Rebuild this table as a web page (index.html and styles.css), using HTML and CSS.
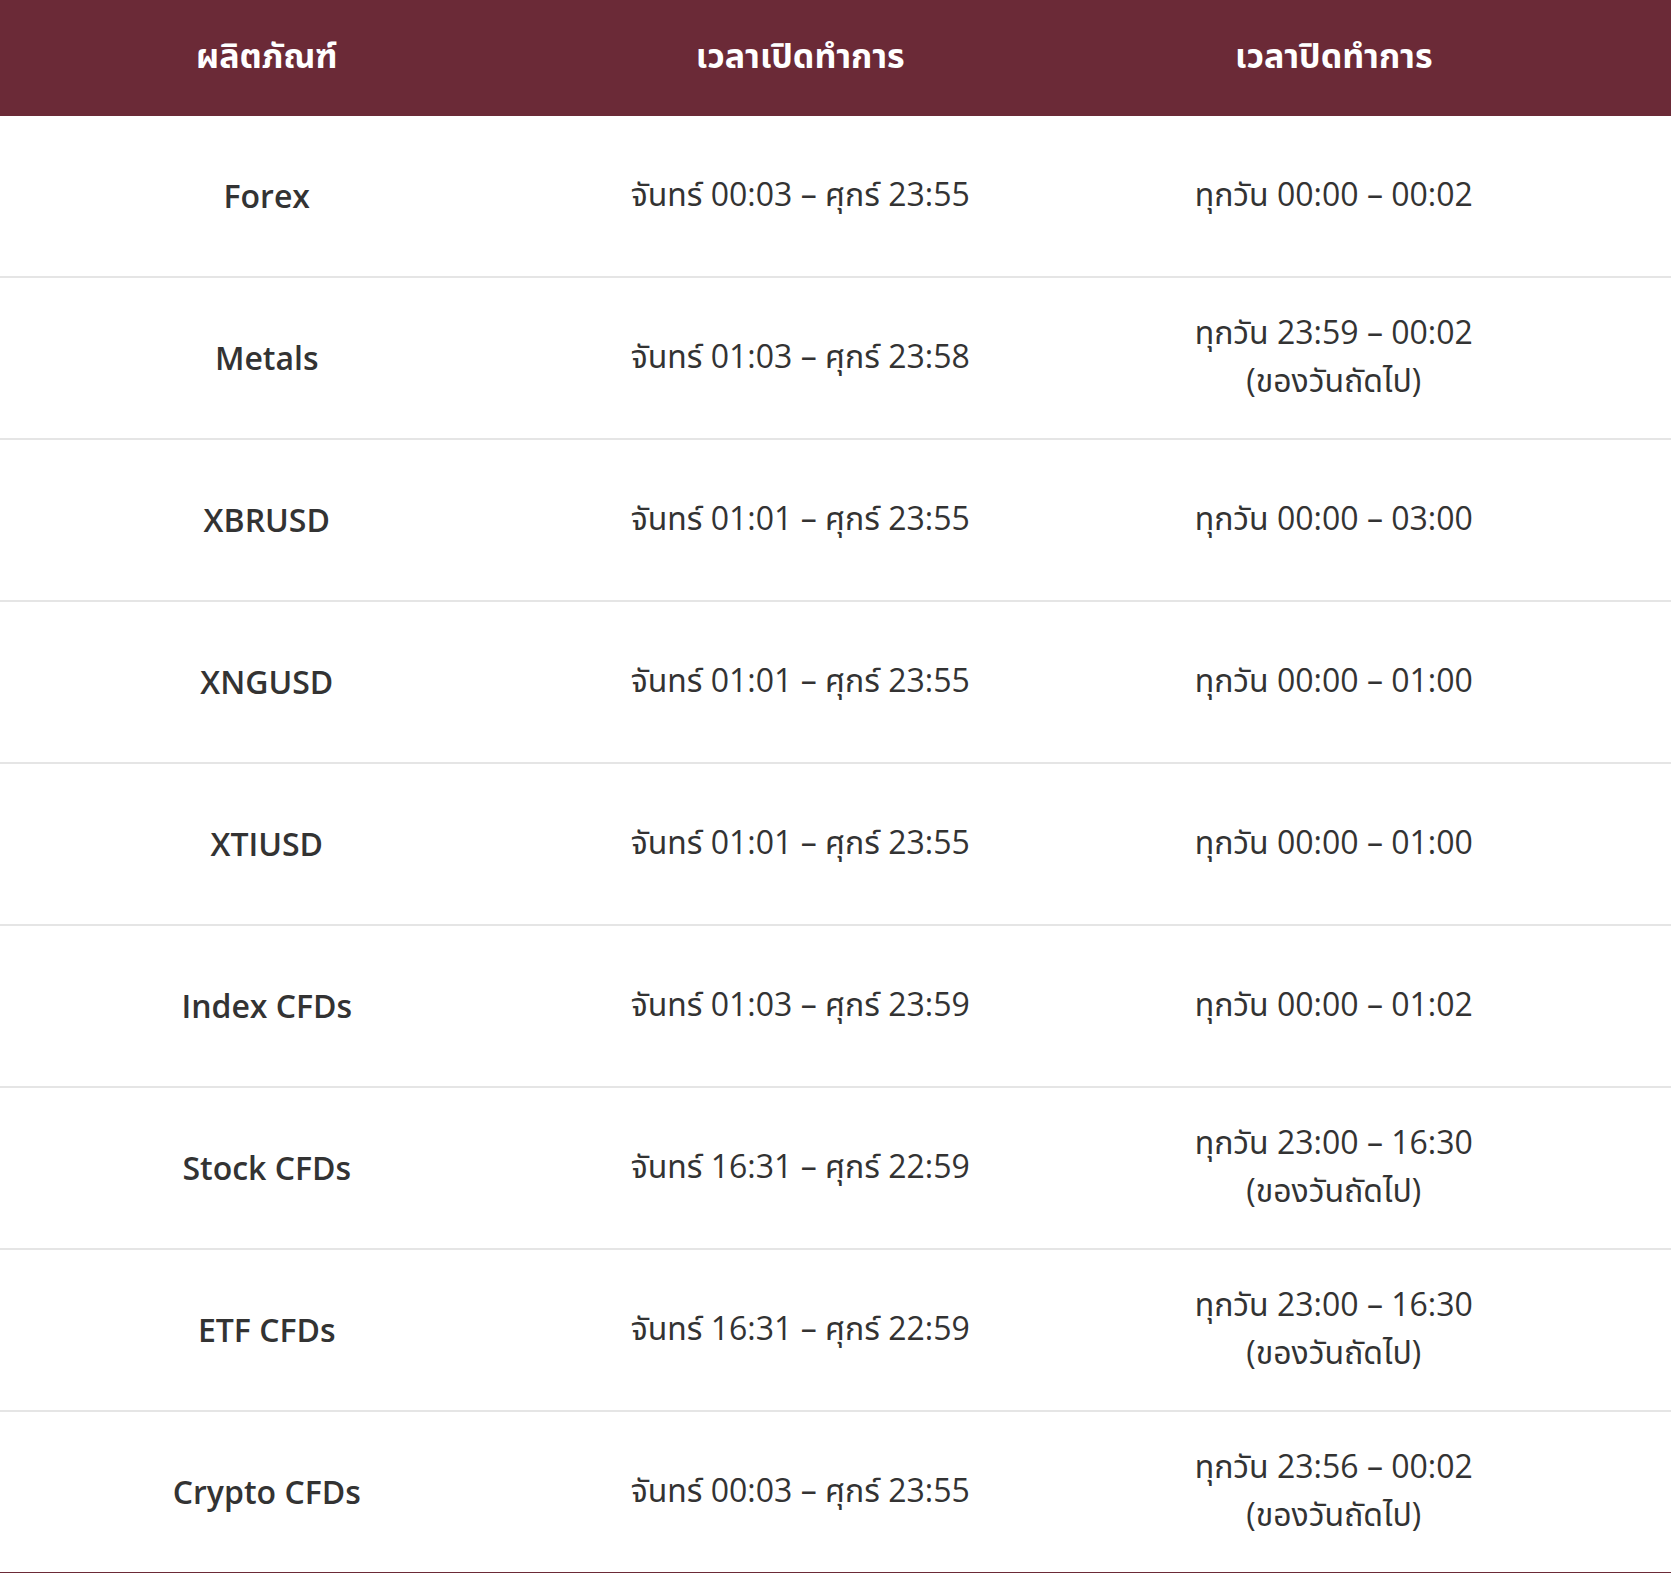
FILE: index.html
```html
<!DOCTYPE html>
<html lang="th">
<head>
<meta charset="utf-8">
<title>เวลาทำการ</title>
<link rel="stylesheet" href="styles.css">
</head>
<body>
<div class="table">
  <div class="row head">
    <div class="cell">ผลิตภัณฑ์</div>
    <div class="cell">เวลาเปิดทำการ</div>
    <div class="cell">เวลาปิดทำการ</div>
  </div>
  <div class="row">
    <div class="cell name">Forex</div>
    <div class="cell time">จันทร์ 00:03 – ศุกร์ 23:55</div>
    <div class="cell time">ทุกวัน 00:00 – 00:02</div>
  </div>
  <div class="row">
    <div class="cell name">Metals</div>
    <div class="cell time">จันทร์ 01:03 – ศุกร์ 23:58</div>
    <div class="cell time">ทุกวัน 23:59 – 00:02<br>(ของวันถัดไป)</div>
  </div>
  <div class="row">
    <div class="cell name">XBRUSD</div>
    <div class="cell time">จันทร์ 01:01 – ศุกร์ 23:55</div>
    <div class="cell time">ทุกวัน 00:00 – 03:00</div>
  </div>
  <div class="row">
    <div class="cell name">XNGUSD</div>
    <div class="cell time">จันทร์ 01:01 – ศุกร์ 23:55</div>
    <div class="cell time">ทุกวัน 00:00 – 01:00</div>
  </div>
  <div class="row">
    <div class="cell name">XTIUSD</div>
    <div class="cell time">จันทร์ 01:01 – ศุกร์ 23:55</div>
    <div class="cell time">ทุกวัน 00:00 – 01:00</div>
  </div>
  <div class="row">
    <div class="cell name">Index CFDs</div>
    <div class="cell time">จันทร์ 01:03 – ศุกร์ 23:59</div>
    <div class="cell time">ทุกวัน 00:00 – 01:02</div>
  </div>
  <div class="row">
    <div class="cell name">Stock CFDs</div>
    <div class="cell time">จันทร์ 16:31 – ศุกร์ 22:59</div>
    <div class="cell time">ทุกวัน 23:00 – 16:30<br>(ของวันถัดไป)</div>
  </div>
  <div class="row">
    <div class="cell name">ETF CFDs</div>
    <div class="cell time">จันทร์ 16:31 – ศุกร์ 22:59</div>
    <div class="cell time">ทุกวัน 23:00 – 16:30<br>(ของวันถัดไป)</div>
  </div>
  <div class="row last">
    <div class="cell name">Crypto CFDs</div>
    <div class="cell time">จันทร์ 00:03 – ศุกร์ 23:55</div>
    <div class="cell time">ทุกวัน 23:56 – 00:02<br>(ของวันถัดไป)</div>
  </div>
</div>
</body>
</html>
```

FILE: styles.css
```css
html, body {
  margin: 0;
  padding: 0;
  background: #ffffff;
}

.table {
  width: 1671px;
  font-family: "Open Sans", "Noto Sans Thai", "Noto Sans", sans-serif;
  color: #333333;
}

.row {
  display: grid;
  grid-template-columns: 533.5px 533.5px 533.5px 1fr;
  height: 160px;
  align-items: center;
  border-bottom: 2px solid #e5e5e5;
  font-size: 32px;
  line-height: 48px;
}

.row.last {
  border-bottom: 2px solid #6b2a37;
}

.cell {
  text-align: center;
}

.time {
  padding-bottom: 4px;
}

.name {
  font-weight: 600;
}

.row.head {
  height: 110px;
  padding-bottom: 6px;
  background: #6b2a37;
  border-bottom: none;
  color: #ffffff;
  font-weight: 700;
  font-size: 34px;
}
```
